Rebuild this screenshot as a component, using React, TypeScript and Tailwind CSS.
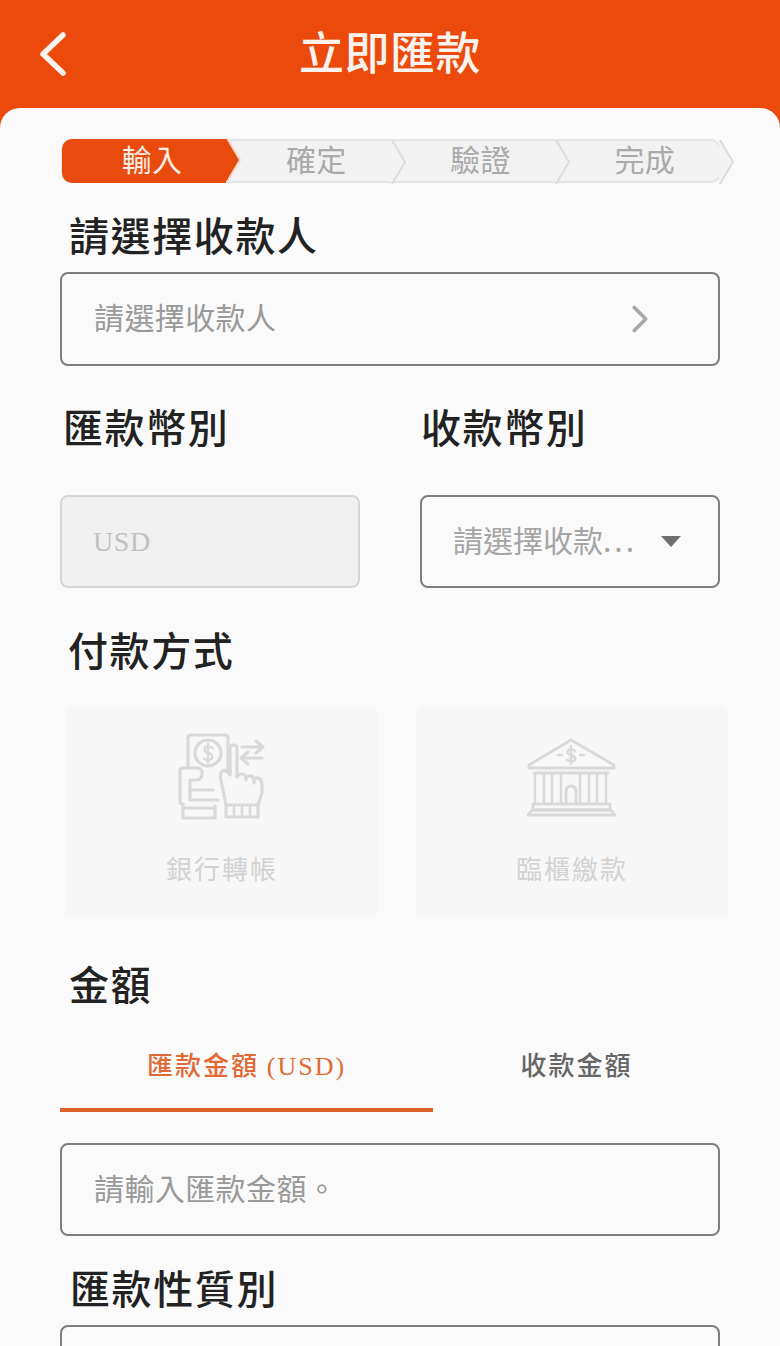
import { ChevronRight } from "lucide-react";

const font = { fontFamily: '"Noto Sans CJK TC", "Noto Sans", sans-serif' };

const steps = ["輸入", "確定", "驗證", "完成"];

function Stepper() {
  return (
    <div className="relative flex w-[660px] h-[44px] ml-[1px] rounded-[10px] bg-[#f2f2f2] border-2 border-[#e4e4e4]">
      {steps.map((step, index) => (
        <div
          key={step}
          className={
            index === 0
              ? "relative w-[165px] -my-[2px] -ml-[1px] flex items-center justify-center rounded-l-[10px] bg-[#e94b0e] text-[#fdeee8] text-[30px] leading-none"
              : "relative w-[165px] flex items-center justify-center text-[#a9a9a9] text-[30px] leading-none"
          }
        >
          <span className="relative z-10 pl-[16px] pb-[6px] tracking-[0.5px]">{step}</span>
          <svg
            className="absolute left-full top-[-1px] z-20"
            width="16"
            height="44"
            viewBox="0 0 16 44"
            fill={index === 0 ? "#e94b0e" : "#f2f2f2"}
            stroke={index === 0 ? "#f6d6c8" : "#dcdcdc"}
            strokeWidth="2"
          >
            <path d="M-1 0 L1 0 L14 22 L1 44 L-1 44" />
          </svg>
        </div>
      ))}
    </div>
  );
}

function Title({ children, className = "" }: { children: string; className?: string }) {
  return (
    <h2 className={"h-[56px] flex items-center pb-[6px] text-[40px] leading-none font-medium text-[#222222] tracking-[1.6px] " + className}>
      {children}
    </h2>
  );
}

function BackIcon() {
  return (
    <svg className="absolute left-[36px] top-[30px]" width="32" height="48" viewBox="0 0 32 48" fill="none" stroke="#fdf3ee" strokeWidth="5.5" strokeLinecap="round" strokeLinejoin="round">
      <path d="M27 5 L7 24 L27 43" />
    </svg>
  );
}

function TransferIcon() {
  return (
    <svg width="88" height="90" viewBox="0 0 88 90" fill="none" stroke="#d9d9d9" strokeWidth="3.2" strokeLinecap="round" strokeLinejoin="round">
      <path d="M10 34 V5 Q10 2 13 2 H47 Q50 2 50 5 V38" />
      <circle cx="30" cy="20" r="13" />
      <path d="M34.5 15 Q30 12 27 14.5 Q25 18.5 30 20 Q35.5 21.5 34 25.5 Q30 28.5 26 25.5 M30 10.5 V29.5" strokeWidth="2.4" />
      <path d="M64 14 H84 M78 8 L85 14 L78 20" />
      <path d="M84 25 H64 M70 19 L63 25 L70 31" />
      <path d="M20 35 H5 Q2 35 2 38 V68 Q2 71 5 71 L5 85 H37 V73" />
      <path d="M20 35 Q25 36 24 42 Q23 47 18 47 H12 V57 H35" />
      <path d="M12 57 V67 H40" />
      <path d="M5 75 H37" />
      <path d="M48 72 L44 52 Q41 42 44 38 Q48 36 52 42 V16 Q52 12 55.5 12 Q59 12 59 16 V44" />
      <path d="M59 44 Q60 41 64 41 Q67 41 68 44 V47" />
      <path d="M68 45 Q70 42 73 43 Q76 44 76 47 V50" />
      <path d="M76 46 Q79 44 82 46 Q84 48 84 52 V60 L80 72" />
      <path d="M48 72 H80 V84 H48 Z" />
      <path d="M56 74 V83 M64 74 V83 M72 74 V83" strokeWidth="2.6" />
    </svg>
  );
}

function BankIcon() {
  return (
    <svg width="90" height="80" viewBox="0 0 90 80" fill="none" stroke="#d9d9d9" strokeWidth="2.8" strokeLinecap="round" strokeLinejoin="round">
      <path d="M44 2 L87 27 V30 H2 V27 Z" />
      <path d="M7 35 H81" />
      <path d="M8 35 V66 M17 35 V66 M25 35 V66 M34 35 V66 M53 35 V66 M62 35 V66 M70 35 V66 M79 35 V66" strokeWidth="2.4" />
      <path d="M39 66 V54 Q39 48 44 48 Q49 48 49 54 V66" />
      <path d="M6 66 H83 V72 H6 Z" />
      <path d="M1 77 L5 72 H84 L88 77 Z" />
      <path d="M48 13 Q44 10 41 12.5 Q39 16 44 17 Q49 18.5 48 22 Q45 25 40 22 M44 8 V26" strokeWidth="2.4" />
      <path d="M31 17 H35 M53 17 H57" strokeWidth="2.4" />
    </svg>
  );
}

function PayOption({ icon, label }: { icon: React.ReactNode; label: string }) {
  return (
    <div className="w-[312px] h-[210px] rounded-[8px] bg-[#f7f7f7] flex flex-col items-center pt-[27px]">
      <div className="h-[90px] flex items-center justify-center">{icon}</div>
      <div className="mt-[27px] text-[26px] leading-[36px] tracking-[2px] text-[#d2d2d2]">{label}</div>
    </div>
  );
}

export default function App() {
  return (
    <div className="w-[780px] h-[1346px] overflow-hidden bg-[#eb4a0c]" style={font}>
      <header className="relative h-[108px] flex items-center justify-center pb-[8px]">
        <BackIcon />
        <h1 className="text-[45px] leading-none font-medium text-[#fdf3ee] tracking-[0.5px]">立即匯款</h1>
      </header>

      <main className="h-[1238px] rounded-t-[20px] bg-[#fafafa] pt-[31px] pl-[60px]">
        <Stepper />

        <Title className="ml-[9px] mt-[26px]">請選擇收款人</Title>
        <div className="mt-[7px] w-[660px] h-[94px] rounded-[8px] border-2 border-[#7e7e7e] flex items-center justify-between pl-[32px] pr-[55px]">
          <span className="pb-[6px] text-[30px] leading-none text-[#999999] tracking-[0.4px]">請選擇收款人</span>
          <ChevronRight className="text-[#a8a8a8]" size={46} strokeWidth={1.9} />
        </div>

        <div className="flex gap-[60px] mt-[35px]">
          <div className="w-[300px]">
            <Title className="ml-[3px]">匯款幣別</Title>
            <div
              className="mt-[38px] h-[93px] rounded-[8px] border-2 border-[#d5d5d5] bg-[#f0f0f0] flex items-center pl-[31px] text-[28px] tracking-[0.6px] text-[#c0c0c0]"
              style={{ fontFamily: '"Liberation Serif", serif' }}
            >
              USD
            </div>
          </div>
          <div className="w-[300px]">
            <Title className="ml-[1px]">收款幣別</Title>
            <div className="mt-[38px] h-[93px] rounded-[8px] border-2 border-[#7e7e7e] flex items-center justify-between pl-[31px] pr-[37px]">
              <span className="pb-[6px] text-[30px] leading-none text-[#a5a5a5]">
                請選擇收款<span className="tracking-[3px]">...</span>
              </span>
              <span className="w-0 h-0 border-x-[10px] border-x-transparent border-t-[11px] border-t-[#6e6e6e]" />
            </div>
          </div>
        </div>

        <Title className="ml-[8px] mt-[36px]">付款方式</Title>
        <div className="flex gap-[38px] ml-[6px] mt-[26px]">
          <PayOption icon={<TransferIcon />} label="銀行轉帳" />
          <PayOption icon={<BankIcon />} label="臨櫃繳款" />
        </div>

        <Title className="ml-[9px] mt-[42px]">金額</Title>

        <div className="flex w-[660px] mt-[24px]">
          <div className="w-[373px] h-[74px] border-b-4 border-[#e0622a] flex justify-center pt-[8px] text-[26px] leading-[36px] tracking-[2px] font-medium text-[#df6a35]">
            <span>
              匯款金額 <span style={{ fontFamily: '"Liberation Serif", serif' }}>(USD)</span>
            </span>
          </div>
          <div className="flex-1 flex justify-center pt-[8px] text-[26px] leading-[36px] tracking-[2px] font-medium text-[#666666]">
            <span>收款金額</span>
          </div>
        </div>

        <div className="mt-[31px] w-[660px] h-[93px] rounded-[8px] border-2 border-[#7e7e7e] flex items-center pl-[32px]">
          <span className="pb-[6px] text-[30px] leading-none text-[#999999] tracking-[0.4px]">請輸入匯款金額。</span>
        </div>

        <Title className="ml-[10px] mt-[26px]">匯款性質別</Title>
        <div className="mt-[7px] w-[660px] h-[93px] rounded-[8px] border-2 border-[#7e7e7e]" />
      </main>
    </div>
  );
}
